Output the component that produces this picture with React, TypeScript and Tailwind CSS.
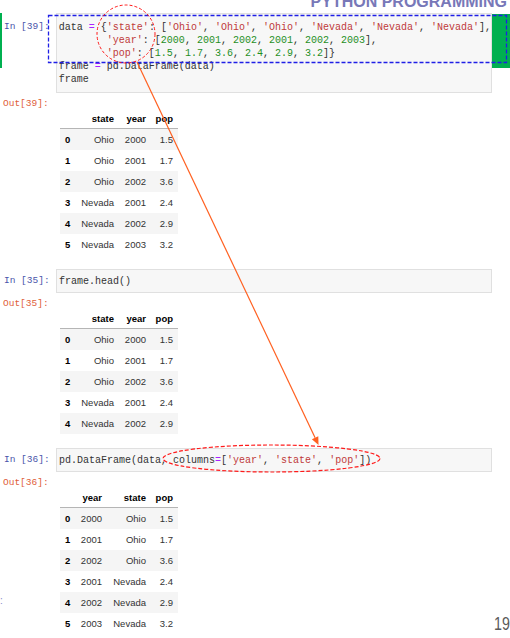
import React from "react";

type Tok = { t: string; c?: "s" | "n" | "o" };

const S = (t: string): Tok => ({ t, c: "s" });
const N = (t: string): Tok => ({ t, c: "n" });
const O = (t: string): Tok => ({ t, c: "o" });
const D = (t: string): Tok => ({ t });

function CodeLine({ toks }: { toks: Tok[] }) {
  return (
    <div className="whitespace-pre h-[13px] leading-[13px]">
      {toks.map((k, i) =>
        k.c === "s" ? (
          <span key={i} className="text-[#c03a3a]">{k.t}</span>
        ) : k.c === "n" ? (
          <span key={i} className="text-[#1f8f1f]">{k.t}</span>
        ) : k.c === "o" ? (
          <span key={i} className="text-[#aa22ff]">{k.t}</span>
        ) : (
          <span key={i}>{k.t}</span>
        )
      )}
    </div>
  );
}

const code1: Tok[][] = [
  [D("data "), O("="), D(" {"), S("'state'"), D(": ["), S("'Ohio'"), D(", "), S("'Ohio'"), D(", "), S("'Ohio'"), D(", "), S("'Nevada'"), D(", "), S("'Nevada'"), D(", "), S("'Nevada'"), D("],")],
  [D("        "), S("'year'"), D(": ["), N("2000"), D(", "), N("2001"), D(", "), N("2002"), D(", "), N("2001"), D(", "), N("2002"), D(", "), N("2003"), D("],")],
  [D("        "), S("'pop'"), D(": ["), N("1.5"), D(", "), N("1.7"), D(", "), N("3.6"), D(", "), N("2.4"), D(", "), N("2.9"), D(", "), N("3.2"), D("]}")],
  [D("frame "), O("="), D(" pd.DataFrame(data)")],
  [D("frame")],
];

const code2: Tok[][] = [[D("frame.head()")]];
const code3: Tok[][] = [
  [D("pd.DataFrame(data, columns"), O("="), D("["), S("'year'"), D(", "), S("'state'"), D(", "), S("'pop'"), D("])")],
];

const mono = "font-['Liberation_Mono',monospace]";

function Table({
  cols,
  rows,
  gridClass,
}: {
  cols: string[];
  rows: string[][];
  gridClass: string;
}) {
  return (
    <div className="w-[118px] font-['Liberation_Sans',Arial,sans-serif] text-[9.5px] leading-none">
      <div className={`grid ${gridClass} h-[20px] items-center border-b border-[#b5b5b5] font-bold text-black`}>
        <div />
        {cols.map((c, i) => (
          <div key={i} className={i === cols.length - 1 ? "text-right pr-[5px]" : "text-right pr-[4px]"}>
            {c}
          </div>
        ))}
      </div>
      {rows.map((r, ri) => (
        <div
          key={ri}
          className={`grid ${gridClass} h-[21px] items-center ${ri % 2 === 0 ? "bg-[#f5f5f5]" : "bg-white"}`}
        >
          <div className="pl-[5px] font-bold text-black">{ri}</div>
          {r.map((v, i) => (
            <div key={i} className={`text-[#333] ${i === r.length - 1 ? "text-right pr-[5px]" : "text-right pr-[4px]"}`}>
              {v}
            </div>
          ))}
        </div>
      ))}
    </div>
  );
}

const rowsA = [
  ["Ohio", "2000", "1.5"],
  ["Ohio", "2001", "1.7"],
  ["Ohio", "2002", "3.6"],
  ["Nevada", "2001", "2.4"],
  ["Nevada", "2002", "2.9"],
  ["Nevada", "2003", "3.2"],
];
const rowsB = [
  ["2000", "Ohio", "1.5"],
  ["2001", "Ohio", "1.7"],
  ["2002", "Ohio", "3.6"],
  ["2001", "Nevada", "2.4"],
  ["2002", "Nevada", "2.9"],
  ["2003", "Nevada", "3.2"],
];

function OutRow({ n, children }: { n: number; children: React.ReactNode }) {
  return (
    <div className="flex mt-[4px]">
      <div className="w-[2px]" />
      <div className={`w-[54px] pl-[1px] ${mono} text-[9.5px] leading-[14px] text-[#e0603a] whitespace-pre`}>
        {`Out[${n}]:`}
      </div>
      <div className="ml-[4px] mt-[12px]">{children}</div>
    </div>
  );
}

function SmallIn({ n, code }: { n: number; code: Tok[][] }) {
  return (
    <div className="flex mt-[14px]">
      <div className="w-[2px]" />
      <div className={`w-[54px] pl-[2px] ${mono} text-[9.5px] leading-[24px] text-[#4a55aa] whitespace-pre`}>
        {`In [${n}]:`}
      </div>
      <div className={`flex-1 h-[24px] flex items-center border border-[#e0e0e0] bg-[#f7f7f7] pl-[2px] ${mono} text-[10px] text-[#333]`}>
        <div>
          {code.map((l, i) => (
            <CodeLine key={i} toks={l} />
          ))}
        </div>
      </div>
      <div className="w-[18px]" />
    </div>
  );
}

export default function App() {
  return (
    <div className="relative w-[510px] h-[638px] overflow-hidden bg-white">
      {/* slide header */}
      <div className="h-[13px] overflow-hidden flex justify-end pr-[3px]">
        <span className="mt-[-6.5px] font-['Liberation_Sans',Arial,sans-serif] font-bold text-[16px] leading-[16px] text-[#7878b8] whitespace-nowrap">
          PYTHON PROGRAMMING
        </span>
      </div>

      {/* cell 1 */}
      <div className="flex">
        <div className="w-[2px] h-[55px] bg-[#00b050]" />
        <div className={`w-[54px] pl-[2px] pt-[7px] ${mono} text-[9.5px] leading-[13px] text-[#4a55aa] whitespace-pre`}>
          In [39]:
        </div>
        <div className={`flex-1 h-[80px] border border-[#e0e0e0] bg-[#f7f7f7] py-[6.5px] pl-[2px] ${mono} text-[10px] text-[#333]`}>
          {code1.map((l, i) => (
            <CodeLine key={i} toks={l} />
          ))}
        </div>
        <div className="w-[18px]">
          <div className="mt-[1px] h-[54px] bg-[#00b050]" />
        </div>
      </div>
      <OutRow n={39}>
        <Table cols={["state", "year", "pop"]} rows={rowsA} gridClass="grid-cols-[17px_41px_32px_28px]" />
      </OutRow>

      {/* cell 2 */}
      <SmallIn n={35} code={code2} />
      <OutRow n={35}>
        <Table cols={["state", "year", "pop"]} rows={rowsA.slice(0, 5)} gridClass="grid-cols-[17px_41px_32px_28px]" />
      </OutRow>

      {/* cell 3 */}
      <SmallIn n={36} code={code3} />
      <OutRow n={36}>
        <Table cols={["year", "state", "pop"]} rows={rowsB} gridClass="grid-cols-[17px_29px_44px_28px]" />
      </OutRow>

      {/* annotations */}
      <svg className="absolute left-0 top-0 pointer-events-none" width="510" height="638" viewBox="0 0 510 638">
        <rect x="48.5" y="15.5" width="458" height="47" fill="none" stroke="#1f1fe6" strokeWidth="1.3" strokeDasharray="4 2" />
        <ellipse cx="126" cy="34" rx="29" ry="29" fill="none" stroke="#ff1a1a" strokeWidth="1" strokeDasharray="3 2" />
        <line x1="137" y1="62" x2="315.1" y2="437.8" stroke="#ff6020" strokeWidth="1.2" />
        <polygon points="318.5,445 318.3,436.3 311.9,439.3" fill="#ff6020" />
        <ellipse cx="271.5" cy="458.5" rx="108.5" ry="13.5" fill="none" stroke="#ff1a1a" strokeWidth="1.2" strokeDasharray="4 2" />
      </svg>
      <div className="absolute left-0 top-[596px] font-['Liberation_Sans',Arial,sans-serif] text-[10px] leading-[10px] text-[#8a8ac8]">
        :
      </div>
      <div className="absolute left-[494px] top-[614px] origin-left scale-x-75 font-['Liberation_Sans',Arial,sans-serif] text-[19px] leading-[19px] text-[#5a5a5a] whitespace-nowrap">
        19
      </div>
    </div>
  );
}
